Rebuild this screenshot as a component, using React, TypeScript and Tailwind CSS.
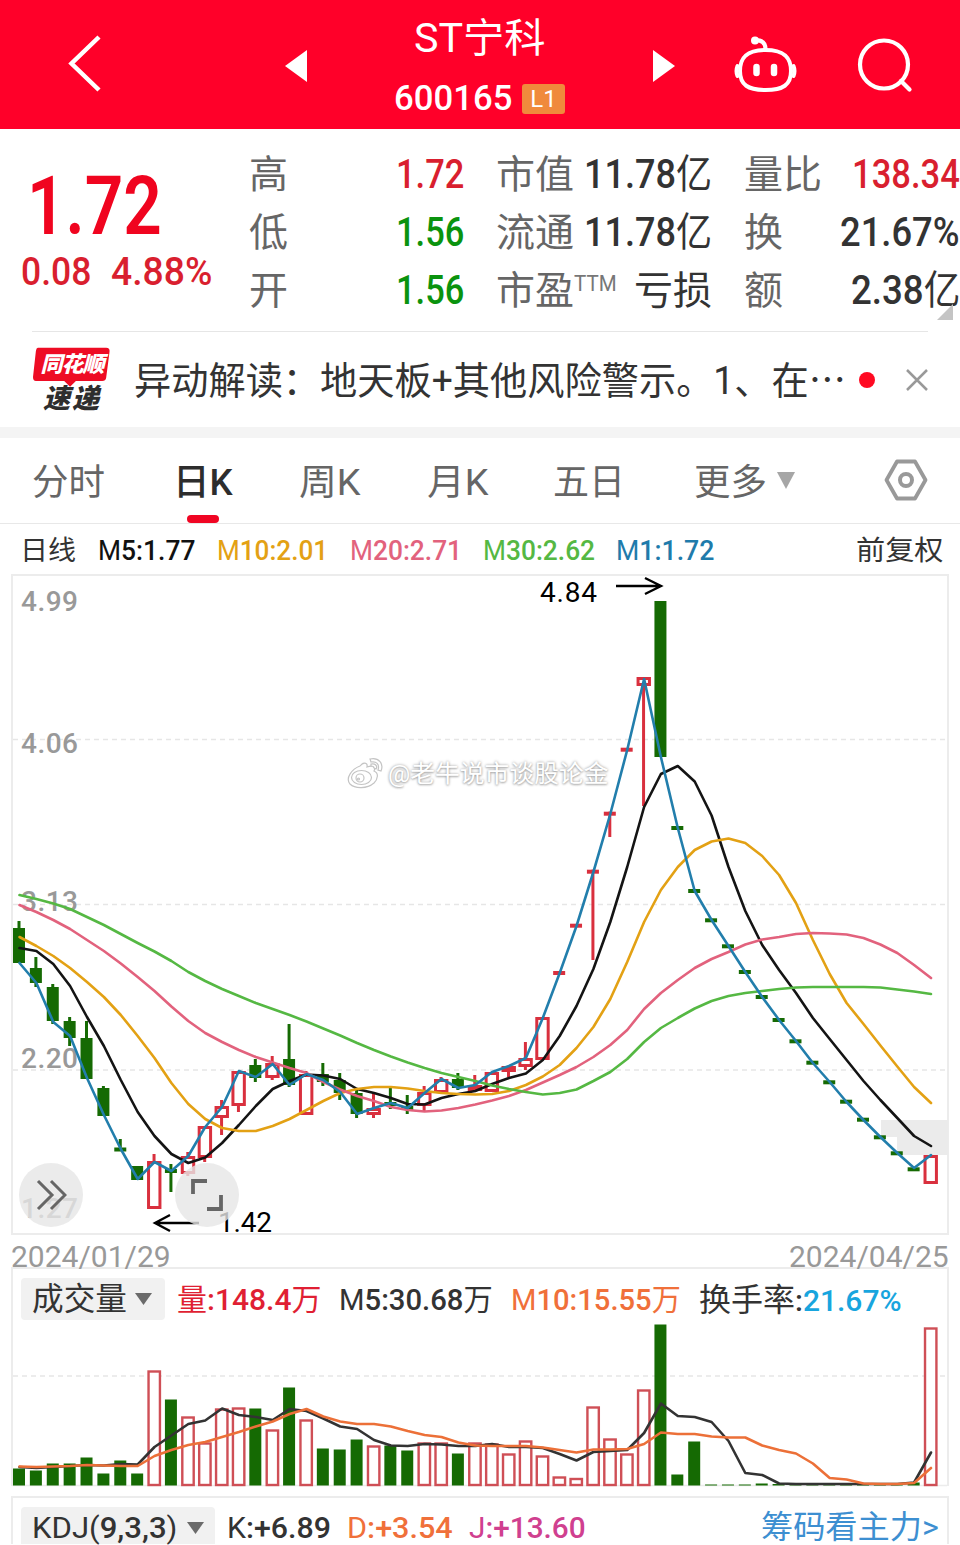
import { useLayoutEffect, useRef, type ReactNode } from 'react'

type Candle = {
  up: boolean
  top: number
  bottom: number
  high?: number
  low?: number
}

const UP = '#d9303e'
const DOWN = '#156a03'

const STEP = 16.88
const xAt = (i: number) => 19 + STEP * i

const up = (top: number, bottom: number, high?: number, low?: number): Candle => ({ up: true, top, bottom, high, low })
const down = (top: number, bottom: number, high?: number, low?: number): Candle => ({ up: false, top, bottom, high, low })
// open equals close: a flat dash
const flat = (isUp: boolean, y: number, high?: number, low?: number): Candle => ({ up: isUp, top: y - 2, bottom: y + 2, high, low })

const CANDLES: Candle[] = [
  down(928, 963, 921), down(968, 983, 957, 987), down(987, 1021, 984, 1024), down(1021, 1038, 1017, 1046),
  down(1038, 1079, 1021), down(1088, 1116, 1086), flat(false, 1149.5, 1139), down(1166, 1180),
  up(1161, 1209, 1154), flat(false, 1171, 1164, 1192), up(1156, 1174, 1152, 1176), up(1126, 1158, 1126, 1162),
  up(1106, 1118, 1100, 1135), up(1071, 1106, 1071, 1112), down(1065, 1078, 1059, 1082), up(1063, 1078, 1056, 1080),
  down(1059, 1085, 1024, 1087), up(1074, 1115, 1071), down(1074, 1082, 1063, 1086), down(1080, 1093, 1073, 1100),
  down(1093, 1114, 1090, 1118), up(1108, 1115, 1093, 1118), flat(false, 1104, 1088, 1109), flat(false, 1108, 1095, 1114),
  up(1092, 1106, 1086, 1111), up(1079, 1093, 1077), down(1079, 1088, 1073, 1090), up(1085, 1091, 1075),
  up(1072, 1092), up(1066, 1072, 1066, 1077), up(1058, 1067, 1042, 1070), up(1017, 1060),
  flat(true, 973), flat(true, 925.7), flat(true, 871.7, 871, 960), flat(true, 813.7, 813, 837),
  flat(true, 749.7), up(677, 686, 677, 806), down(601, 757), flat(false, 828), flat(false, 891),
  flat(false, 920.3), flat(false, 946.3), flat(false, 972), flat(false, 997), flat(false, 1020),
  flat(false, 1041.3), flat(false, 1062.7), flat(false, 1082.3), flat(false, 1101.7), flat(false, 1119.7),
  flat(false, 1137.3), flat(false, 1153.3), flat(false, 1169.3), up(1155, 1184),
]

const M1 = [963, 983, 1022, 1036, 1078, 1115, 1149, 1179, 1162, 1171, 1156, 1127, 1107, 1071, 1077, 1064, 1085, 1074, 1080, 1092, 1114, 1108, 1103, 1108, 1093, 1079, 1088, 1085, 1072, 1066, 1058, 1018, 973, 926, 872, 814, 750, 679, 757, 828, 891, 920, 946, 972, 997, 1020, 1041, 1063, 1082, 1102, 1120, 1137, 1153, 1168, 1155]
const M5 = [948, 951, 964, 986, 1017, 1046, 1080, 1112, 1136, 1154, 1163, 1157.5, 1143, 1125, 1106, 1089, 1081, 1074.5, 1075.5, 1079, 1089, 1093, 1098, 1104, 1104.5, 1098, 1094, 1091, 1084, 1078, 1073.5, 1060, 1036, 1006, 969, 922, 867, 807, 774, 766, 781.5, 815.5, 867, 911, 945, 970, 993, 1018, 1039, 1060, 1081, 1100, 1118, 1136, 1146]
const M10 = [937, 946, 956, 968, 982, 997, 1015, 1036, 1058, 1083, 1104, 1119, 1128, 1131, 1131, 1126, 1119, 1110, 1101, 1093, 1089, 1087, 1087, 1088.5, 1091, 1093, 1094, 1094.5, 1094, 1091, 1085, 1076.5, 1065, 1048, 1027, 999, 962, 922, 890, 867, 850, 841.5, 838.5, 843, 856, 875, 903, 940, 974, 1003, 1024, 1045.5, 1066.5, 1087, 1103]
const M20 = [905, 912, 920, 929, 940, 951, 963.5, 977, 991, 1006.5, 1021, 1033, 1042, 1050, 1057, 1062.5, 1068, 1073, 1082, 1089.5, 1096, 1101, 1107, 1110, 1111.5, 1110.5, 1108, 1104.5, 1100.5, 1096, 1090, 1082.5, 1075, 1067, 1057, 1045, 1030, 1009, 993, 980, 968, 959, 952, 944.5, 939.5, 937, 934, 933, 933.5, 934.5, 938, 944.5, 953, 965, 978]
const M30 = [895, 899, 903.5, 909, 917, 925, 934, 943, 951.5, 961, 972, 981, 989, 996, 1003, 1009, 1015, 1021.5, 1028.5, 1035.5, 1043, 1050, 1056.5, 1062.5, 1068, 1073, 1077, 1081, 1085.5, 1089, 1092, 1094.5, 1093, 1089.5, 1081, 1072, 1059, 1042, 1028, 1018, 1008.5, 1001, 996, 993, 991, 989, 987.5, 987, 987, 987, 987, 987.5, 989.5, 991.5, 994]

// bar tops, the base line sits at 1486
const VOL = [1469, 1471, 1464, 1464, 1458, 1474, 1461, 1474, 1371, 1400, 1417, 1443, 1409, 1408, 1409, 1430, 1388, 1420, 1449, 1450, 1440, 1446, 1446, 1451, 1443, 1443, 1454, 1443, 1444, 1454, 1441, 1456, 1477, 1478.5, 1407, 1439, 1454, 1390, 1325, 1475, 1442, 1485, 1485, 1485, 1484, 1484.5, 1485, 1485, 1485, 1485, 1485, 1485, 1485, 1483, 1328]
const VOL_M5 = [1467, 1468, 1467, 1466, 1465, 1465.5, 1464, 1464.5, 1447, 1435.5, 1424, 1420.5, 1408.5, 1415, 1417, 1420, 1409, 1411, 1418.5, 1426.5, 1429, 1440, 1445.5, 1446, 1444, 1444.5, 1446, 1446, 1444, 1447, 1447, 1448, 1454, 1460.5, 1452, 1451, 1450, 1433, 1403.5, 1416, 1417, 1422, 1441, 1473, 1475, 1483.5, 1484, 1484, 1484, 1484, 1484, 1484, 1484, 1482.5, 1452.5]
const VOL_M10 = [1466.5, 1467, 1466.5, 1466, 1465, 1465.5, 1466, 1466, 1456, 1450, 1445, 1442, 1437, 1432, 1426.5, 1421.5, 1414, 1409, 1416.5, 1421.5, 1424, 1424, 1426.5, 1431, 1435, 1437, 1442.5, 1445.5, 1446, 1446, 1446, 1447.5, 1450, 1452.5, 1449.5, 1449.5, 1449, 1444, 1432.5, 1434, 1434, 1436.5, 1437.5, 1437.5, 1445.5, 1450, 1453.5, 1463.5, 1478, 1479.5, 1483.5, 1484, 1484, 1483, 1468]

const AXIS = [
  { label: '4.99', y: 611 },
  { label: '4.06', y: 753 },
  { label: '3.13', y: 911 },
  { label: '2.20', y: 1068 },
  { label: '1.27', y: 1218 },
]

const TABS = [
  { label: '分时', box: 'w-[73px] ml-[32px]' },
  { label: '日K', box: 'w-[60px] ml-[68px]', active: true },
  { label: '周K', box: 'w-[62px] ml-[66px]' },
  { label: '月K', box: 'w-[62px] ml-[66px]' },
  { label: '五日', box: 'w-[72px] ml-[64px]' },
  { label: '更多', box: 'w-[73px] ml-[69px]' },
]

// Squeezes one line of text into the width of its box
function Fit({ className = '', children }: { className?: string; children: ReactNode }) {
  const boxRef = useRef<HTMLSpanElement>(null)
  const textRef = useRef<HTMLSpanElement>(null)

  useLayoutEffect(() => {
    const box = boxRef.current
    const text = textRef.current
    if (!box || !text) return
    text.style.transform = `scaleX(${box.clientWidth / text.offsetWidth})`
  }, [])

  return (
    <span ref={boxRef} className={`block shrink-0 whitespace-nowrap ${className}`}>
      <span ref={textRef} className="inline-block origin-left">{children}</span>
    </span>
  )
}

function Line({ data, color, width = 2.6 }: { data: number[]; color: string; width?: number }) {
  const points = data.map((y, i) => `${(xAt(i) + 0.5).toFixed(1)},${y}`).join(' ')
  return <polyline points={points} fill="none" stroke={color} strokeWidth={width} strokeLinejoin="round" strokeLinecap="round" />
}

function Header() {
  return (
    <header className="flex h-[129px] items-start bg-[#ff0029] text-white">
      <svg className="ml-[63px] mt-[30px] shrink-0" width="44" height="66" viewBox="62 30 44 66">
        <path d="M98 37 L70.500 63.500 L98 90" fill="none" stroke="#fff" strokeWidth="4.500" />
      </svg>
      <svg className="ml-[178px] mt-[50px] shrink-0" width="22" height="32" viewBox="0 0 22 32">
        <path d="M0 16 L22 0 V32 Z" fill="#fff" />
      </svg>
      <div className="ml-[78px] flex w-[190px] shrink-0 flex-col items-center">
        <Fit className="mt-[17px] w-[132px] text-[40px] leading-[44px]">ST宁科</Fit>
        <div className="mt-[22px] flex w-full items-center pl-[9px]">
          <Fit className="w-[118px] text-[35px] leading-[32px] font-medium">600165</Fit>
          <span className="ml-[10px] flex h-[30px] w-[43px] items-center justify-center rounded-[3px] bg-[#f08a3c] text-[24px] leading-none">L1</span>
        </div>
      </div>
      <svg className="ml-[78px] mt-[50px] shrink-0" width="22" height="32" viewBox="0 0 22 32">
        <path d="M22 16 L0 0 V32 Z" fill="#fff" />
      </svg>
      <svg className="ml-[57px] mt-[34px] shrink-0" width="68" height="62" viewBox="732 34 68 62" fill="none" stroke="#fff">
        <path d="M765.500 50 C786 50 791 59 791 71 C791 85 783 90 765.500 90 C748 90 740 85 740 71 C740 59 745 50 765.500 50 Z" strokeWidth="4" />
        <path d="M737.500 66 Q735.500 71 737.500 76 M793.500 66 Q795.500 71 793.500 76" strokeWidth="4" strokeLinecap="round" />
        <path d="M765.500 49 C765.500 43 762 40 755 40" strokeWidth="4" />
        <circle cx="755" cy="40.500" r="4" fill="#fff" stroke="none" />
        <path d="M756.500 67 V73 M774 67 V73" strokeWidth="6.500" strokeLinecap="round" />
      </svg>
      <svg className="ml-[54px] mt-[34px] shrink-0" width="62" height="62" viewBox="854 34 62 62" fill="none" stroke="#fff" strokeWidth="4.200">
        <circle cx="884" cy="64.500" r="24" />
        <path d="M901 81 L909.500 89.500" strokeLinecap="round" />
      </svg>
    </header>
  )
}

const LABEL = 'text-[39px] text-[#666]'
const VALUE = 'text-[40px] font-medium'

function Quote() {
  return (
    <section className="relative flex h-[202px] pt-[17px]">
      <div className="w-[249px] shrink-0 text-[#f0041f]">
        <Fit className="ml-[27px] mt-[20px] w-[135px] text-[81px] leading-[82px] font-semibold">1.72</Fit>
        <div className="mt-[4px] flex pl-[21px] text-[38px] leading-[40px] font-medium text-[#d91f2f]">
          <Fit className="w-[70px]">0.08</Fit>
          <Fit className="ml-[20px] w-[101px]">4.88%</Fit>
        </div>
      </div>

      <div className="w-[215px] shrink-0 leading-[58px]">
        <div className="flex h-[58px] justify-between">
          <span className={LABEL}>高</span>
          <Fit className={`w-[68px] text-[#d91f2f] ${VALUE}`}>1.72</Fit>
        </div>
        <div className="flex h-[58px] justify-between">
          <span className={LABEL}>低</span>
          <Fit className={`w-[68px] text-[#0a930e] ${VALUE}`}>1.56</Fit>
        </div>
        <div className="flex h-[58px] justify-between">
          <span className={LABEL}>开</span>
          <Fit className={`w-[68px] text-[#0a930e] ${VALUE}`}>1.56</Fit>
        </div>
      </div>

      <div className="ml-[32px] w-[216px] shrink-0 leading-[58px] text-[#333]">
        <div className="flex h-[58px] justify-between">
          <span className={LABEL}>市值</span>
          <Fit className={`w-[128px] ${VALUE}`}>11.78<span className="font-normal">亿</span></Fit>
        </div>
        <div className="flex h-[58px] justify-between">
          <span className={LABEL}>流通</span>
          <Fit className={`w-[128px] ${VALUE}`}>11.78<span className="font-normal">亿</span></Fit>
        </div>
        <div className="flex h-[58px] justify-between">
          <span className="flex">
            <span className={LABEL}>市盈</span>
            <Fit className="w-[43px] text-[22px] leading-[44px] text-[#777]">TTM</Fit>
          </span>
          <span className="text-[39px]">亏损</span>
        </div>
      </div>

      <div className="ml-[32px] w-[216px] shrink-0 leading-[58px] text-[#333]">
        <div className="flex h-[58px] justify-between">
          <span className={LABEL}>量比</span>
          <Fit className={`w-[108px] text-[#d91f2f] ${VALUE}`}>138.34</Fit>
        </div>
        <div className="flex h-[58px] justify-between">
          <span className={LABEL}>换</span>
          <Fit className={`w-[120px] ${VALUE}`}>21.67%</Fit>
        </div>
        <div className="flex h-[58px] justify-between">
          <span className={LABEL}>额</span>
          <Fit className={`w-[109px] ${VALUE}`}>2.38<span className="font-normal">亿</span></Fit>
        </div>
      </div>

      <svg className="absolute right-[7px] bottom-[11px]" width="16" height="16" viewBox="0 0 16 16">
        <path d="M16 0 V16 H0 Z" fill="#c4c4c4" />
      </svg>
    </section>
  )
}

function News() {
  return (
    <section className="mx-8 flex h-[96px] items-center border-t border-[#e6e6e6]">
      <div className="relative ml-[1px] h-[66px] w-[78px] shrink-0 text-center italic">
        <svg className="absolute inset-0" width="78" height="66" viewBox="0 0 80 66">
          <path d="M5 0 H75 Q79 0 78.500 4 L75 31 Q74.500 34 71 34 H44 L38 40 L32 34 H3 Q0 34 0 30 L3 3 Q3.500 0 5 0 Z" fill="#ee0c24" />
        </svg>
        <span className="relative block pt-[4px] text-[22px] leading-[28px] font-black tracking-[-1px] text-white">同花顺</span>
        <span className="relative block pt-[7px] text-[27px] leading-[27px] font-black tracking-[2px] text-[#2e2e2e]">速递</span>
      </div>
      <Fit className="ml-[23px] mt-[3px] w-[712px] text-[38px] leading-[50px] text-[#333]">异动解读：地天板+其他风险警示。1、在⋯</Fit>
      <span className="ml-[13px] size-4 shrink-0 rounded-full bg-[#ff0a22]" />
      <svg className="ml-[30px] shrink-0" width="24" height="24" viewBox="0 0 24 24">
        <path d="M2 2 L22 22 M22 2 L2 22" stroke="#999" strokeWidth="2.500" />
      </svg>
    </section>
  )
}

function Tabs() {
  return (
    <nav className="flex h-[86px] border-b border-[#e8e8e8] text-[36px] text-[#666]">
      {TABS.map(tab => (
        <div key={tab.label} className={`flex shrink-0 flex-col items-center ${tab.box}`}>
          <Fit className={tab.active ? 'w-full leading-[76px] mt-[7px] font-medium text-[#2d2d2d]' : 'w-full leading-[76px] mt-[7px]'}>
            {tab.label}
          </Fit>
          {tab.active && <span className="-mt-[6px] h-[8px] w-[32px] shrink-0 rounded-full bg-[#f00523]" />}
        </div>
      ))}
      <svg className="ml-[9px] mt-[34px] shrink-0" width="20" height="17" viewBox="0 0 20 17">
        <path d="M1 0 H19 L10 17 Z" fill="#a6a6a6" strokeLinejoin="round" />
      </svg>
      <svg className="ml-[87px] mt-[20px] shrink-0" width="46" height="44" viewBox="0 0 46 44" fill="none" stroke="#999">
        <path d="M14 3.500 H32 L42.500 22 L32 40.500 H14 L3.500 22 Z" strokeWidth="3.800" strokeLinejoin="round" />
        <circle cx="23" cy="22" r="6" strokeWidth="4" />
      </svg>
    </nav>
  )
}

function Legend() {
  return (
    <div className="flex h-[50px] text-[27.500px] leading-[54px] font-medium">
      <Fit className="ml-[20px] w-[56px] font-normal text-[#333]">日线</Fit>
      <Fit className="ml-[22px] w-[97px] text-[#111]"><span className="font-normal">M</span>5:1.77</Fit>
      <Fit className="ml-[22px] w-[111px] text-[#e3a114]"><span className="font-normal">M</span>10:2.01</Fit>
      <Fit className="ml-[22px] w-[112px] text-[#e2627d]"><span className="font-normal">M</span>20:2.71</Fit>
      <Fit className="ml-[21px] w-[112px] text-[#55b843]"><span className="font-normal">M</span>30:2.62</Fit>
      <Fit className="ml-[21px] w-[98px] text-[#1f7bab]"><span className="font-normal">M</span>1:1.72</Fit>
      <Fit className="ml-[142px] w-[88px] font-normal text-[#333]">前复权</Fit>
    </div>
  )
}

function PriceChart() {
  return (
    <section className="relative mx-[11px] h-[661px] border-2 border-[#ececec]">
      <svg className="block overflow-visible" width="934" height="657" viewBox="13 576 934 657" fontFamily="Roboto, sans-serif" fontSize="28">
        <path d="M881 1120 H948 V1155 H897 V1137 H881 Z" fill="#ebebeb" />
        {[739.5, 904.5, 1070].map(y => (
          <path key={y} d={`M13 ${y} H947`} stroke="#e6e6e6" strokeWidth="1.500" strokeDasharray="5 4" />
        ))}
        {AXIS.map(a => (
          <text key={a.label} x="21" y={a.y} textLength="57" fill="#999" fontWeight="500">{a.label}</text>
        ))}

        {CANDLES.map((c, i) => {
          const x = xAt(i)
          const color = c.up ? UP : DOWN
          const hollow = c.up && c.bottom - c.top > 5
          return (
            <g key={i}>
              {c.high !== undefined && <path d={`M${x} ${c.high} V${c.top}`} stroke={color} strokeWidth="3" />}
              {c.low !== undefined && <path d={`M${x} ${c.bottom} V${c.low}`} stroke={color} strokeWidth="3" />}
              {hollow
                ? <rect x={x - 5.500} y={c.top + 1.500} width="11.400" height={c.bottom - c.top - 3} fill="#fff" stroke={color} strokeWidth="3" />
                : <rect x={x - 6} y={c.top} width="12" height={c.bottom - c.top} fill={color} />}
            </g>
          )
        })}

        <Line data={M5} color="#141414" />
        <Line data={M10} color="#e3a114" />
        <Line data={M20} color="#e2627d" />
        <Line data={M30} color="#55b843" />
        <Line data={M1} color="#227eac" />

        <text x="540" y="602" textLength="57" fill="#000">4.84</text>
        <path d="M616 586 H660 M645 578 L661 586 L645 594" fill="none" stroke="#000" strokeWidth="2.400" />
        <text x="218" y="1232" textLength="54" fill="#000">1.42</text>
        <path d="M199 1223 H156 M170 1215 L155 1223 L170 1231" fill="none" stroke="#000" strokeWidth="2.400" />
      </svg>

      <div className="absolute left-[333px] top-[178px] flex h-[40px] items-center text-white">
        <svg width="40" height="34" viewBox="0 0 40 34" fill="#fff" stroke="#c4c4c4" strokeWidth="1.200">
          <path d="M14 9 C17 5 22 5 21 10 C27 8 30 10 28 14 C33 16 32 22 28 26 C21 32 9 32 4 27 C-1 21 6 12 14 9 Z" />
          <ellipse cx="15.500" cy="20.500" rx="10" ry="7" />
          <circle cx="14" cy="21" r="4" />
          <circle cx="12.500" cy="22" r="1" />
          <path d="M24 2 C33 0 38 7 35 14 L32 13 C34 7 30 4 25 5 Z M25 7 C29 6 32 9 30 12 L28 11 C28 10 27 9 25 9 Z" />
        </svg>
        <Fit className="ml-[2px] w-[221px] text-[24px] leading-[40px] [text-shadow:0_0_3px_#999,0_1px_2px_#bbb]">@老牛说市谈股论金</Fit>
      </div>

      <button className="absolute left-[6px] top-[587px] flex size-16 items-center justify-center rounded-full bg-[#e6e6e6]/80" aria-label="展开">
        <svg width="32" height="32" viewBox="0 0 32 32" fill="none" stroke="#666" strokeWidth="3">
          <path d="M3 2 L17 16 L3 30 M16 2 L30 16 L16 30" />
        </svg>
      </button>
      <button className="absolute left-[162px] top-[587px] flex size-16 items-center justify-center rounded-full bg-[#e6e6e6]/80" aria-label="全屏">
        <svg width="34" height="34" viewBox="0 0 34 34" fill="none" stroke="#666" strokeWidth="3.800">
          <path d="M3 16 V3 H17 M31 17 V31 H17" />
        </svg>
      </button>
    </section>
  )
}

function Caret() {
  return (
    <svg className="shrink-0" width="17" height="12" viewBox="0 0 17 12">
      <path d="M0 0 H17 L8.500 12 Z" fill="#6b6b6b" />
    </svg>
  )
}

function Volume() {
  return (
    <section className="mx-[11px] h-[219px] border-x-2 border-t-2 border-[#ececec]">
      <div className="flex h-[53px] pt-[9px] text-[30px] leading-[44px] font-medium text-[#333]">
        <div className="ml-[8px] flex h-[42px] w-[144px] shrink-0 items-center rounded-[4px] bg-[#f1f1f1] pl-[11px] font-normal">
          <Fit className="mr-[8px] w-[95px] text-[32px]">成交量</Fit>
          <Caret />
        </div>
        <Fit className="ml-[12px] w-[144px] text-[#e01f33]"><span className="font-normal">量</span>:148.4<span className="font-normal">万</span></Fit>
        <Fit className="ml-[18px] w-[154px]"><span className="font-normal">M</span>5:30.68<span className="font-normal">万</span></Fit>
        <Fit className="ml-[18px] w-[170px] text-[#f0703a]"><span className="font-normal">M</span>10:15.55<span className="font-normal">万</span></Fit>
        <Fit className="ml-[18px] w-[203px]"><span className="text-[32px] font-normal">换手率</span>:<span className="text-[#18a5de]">21.67%</span></Fit>
      </div>
      <svg className="block" width="934" height="165" viewBox="13 1322 934 165">
        <path d="M13 1376 H947" stroke="#e6e6e6" strokeWidth="1.500" strokeDasharray="5 4" />
        <path d="M13 1485.500 H947" stroke="#ececec" strokeWidth="1.500" />
        {VOL.map((y, i) => CANDLES[i].up
          ? <rect key={i} x={xAt(i) - 5.500} y={y + 0.500} width="11.400" height={1484.500 - y} fill="#fff" stroke="#cf4f56" strokeWidth="2.400" />
          : <rect key={i} x={xAt(i) - 6} y={y - 0.500} width="12" height={1486 - y} fill={DOWN} />)}
        <Line data={VOL_M5} color="#333" />
        <Line data={VOL_M10} color="#ec7038" />
      </svg>
    </section>
  )
}

function Kdj() {
  return (
    <section className="mx-[11px] mt-[10px] flex h-[48px] border-x-2 border-t-2 border-[#ececec] pt-[9px] text-[30px] leading-[33px] font-medium text-[#333]">
      <div className="ml-[8px] flex h-[37px] w-[194px] shrink-0 items-center rounded-t-[4px] bg-[#f1f1f1] pt-[4px] pl-[11px]">
        <Fit className="mr-[10px] w-[145px]"><span className="font-normal">KDJ(</span>9,3,3<span className="font-normal">)</span></Fit>
        <Caret />
      </div>
      <Fit className="mt-[4px] ml-[12px] w-[104px]"><span className="font-normal">K</span>:+6.89</Fit>
      <Fit className="mt-[4px] ml-[16px] w-[106px] text-[#f0703a]"><span className="font-normal">D</span>:+3.54</Fit>
      <Fit className="mt-[4px] ml-[16px] w-[117px] text-[#d0408f]"><span className="font-normal">J</span>:+13.60</Fit>
      <Fit className="mt-[4px] ml-[175px] w-[178px] text-[32px] font-normal text-[#3d8fd1]">筹码看主力&gt;</Fit>
    </section>
  )
}

export default function App() {
  return (
    <main className="h-[1545px] w-[960px] overflow-hidden bg-white font-[Roboto,'Noto_Sans_CJK_SC',sans-serif]">
      <Header />
      <Quote />
      <News />
      <div className="h-[11px] bg-[#f4f4f4]" />
      <Tabs />
      <Legend />
      <PriceChart />
      <div className="mx-[11px] flex h-[32px] justify-between text-[30px] leading-[44px] text-[#999]">
        <Fit className="w-[160px]">2024/01/29</Fit>
        <Fit className="w-[160px]">2024/04/25</Fit>
      </div>
      <Volume />
      <Kdj />
    </main>
  )
}
